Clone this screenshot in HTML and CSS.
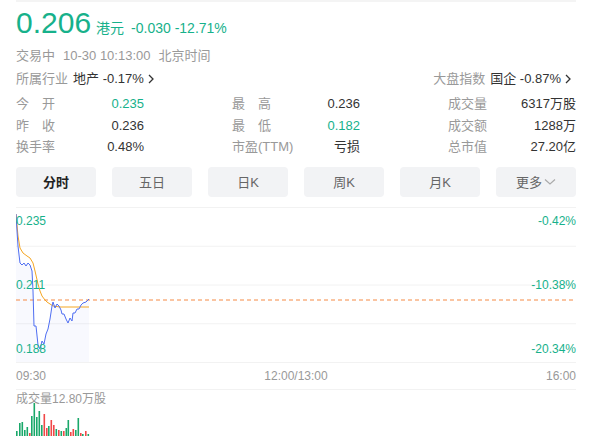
FILE: index.html
```html
<!DOCTYPE html>
<html lang="zh-CN">
<head>
  <meta charset="UTF-8">
  <title>0.206 港元</title>
  <meta name="viewport" content="width=device-width, initial-scale=1.0">
  <link rel="stylesheet" href="styles.css">
</head>
<body>
  <div class="page">
    <div class="topline"></div>

    <div class="quote">
      <span class="price">0.206</span>
      <span class="unit">港元</span>
      <span class="change">-0.030 -12.71%</span>
    </div>

    <div class="status">
      <span>交易中</span>
      <span>10-30 10:13:00</span>
      <span>北京时间</span>
    </div>

    <div class="sector">
      <div class="sector-item">
        <span class="label">所属行业</span>
        <span class="val">地产 -0.17%</span>
        <svg class="arrow" width="6" height="10" viewBox="0 0 6 10"><path d="M1 1l4 4-4 4" fill="none" stroke="#333" stroke-width="1.3"/></svg>
      </div>
      <div class="sector-item">
        <span class="label">大盘指数</span>
        <span class="val">国企 -0.87%</span>
        <svg class="arrow" width="6" height="10" viewBox="0 0 6 10"><path d="M1 1l4 4-4 4" fill="none" stroke="#333" stroke-width="1.3"/></svg>
      </div>
    </div>

    <div class="stats">
      <div class="stat"><span class="label">今　开</span><span class="num down">0.235</span></div>
      <div class="stat"><span class="label">最　高</span><span class="num">0.236</span></div>
      <div class="stat"><span class="label">成交量</span><span class="num">6317万股</span></div>
      <div class="stat"><span class="label">昨　收</span><span class="num">0.236</span></div>
      <div class="stat"><span class="label">最　低</span><span class="num down">0.182</span></div>
      <div class="stat"><span class="label">成交额</span><span class="num">1288万</span></div>
      <div class="stat"><span class="label">换手率</span><span class="num">0.48%</span></div>
      <div class="stat"><span class="label">市盈(TTM)</span><span class="num">亏损</span></div>
      <div class="stat"><span class="label">总市值</span><span class="num">27.20亿</span></div>
    </div>

    <div class="tabs">
      <div class="tab active">分时</div>
      <div class="tab">五日</div>
      <div class="tab">日K</div>
      <div class="tab">周K</div>
      <div class="tab">月K</div>
      <div class="tab">更多<svg class="more" width="12" height="8" viewBox="0 0 12 8"><path d="M1 1.5l5 4.5 5-4.5" fill="none" stroke="#aaa" stroke-width="1.2"/></svg></div>
    </div>

    <div class="chart">
      <svg width="560" height="156" viewBox="0 0 560 156">
        <g stroke="#f2f2f2" stroke-width="1">
          <line x1="0" y1="0.5" x2="560" y2="0.5"/>
          <line x1="0" y1="39.25" x2="560" y2="39.25"/>
          <line x1="0" y1="78" x2="560" y2="78"/>
          <line x1="0" y1="116.75" x2="560" y2="116.75"/>
          <line x1="0" y1="155.5" x2="560" y2="155.5"/>
        </g>
        <polygon fill="rgba(84,108,240,0.045)" points="0,7 1,24 2,39 4,56 6,58 8,56 10,59 12,56 14,58 16,64 17,84 18,119 20,119 22,138 24,142 26,134 28,137 30,127 32,122 34,112 36,99 37,95 39,101 41,97 43,99 45,103 46,107 48,107 50,112 52,116 54,111 56,114 57,106 59,106 61,102 63,102 65,98 67,96 70,95 73,92 73,155 0,155"/>
        <line x1="0" y1="93" x2="560" y2="93" stroke="#f58a45" stroke-width="1" stroke-dasharray="4 3"/>
        <polyline fill="none" stroke="#f5a623" stroke-width="1" points="0,7 2,29 4,41 7,46 11,49 14,51 17,56 19,64 22,77 24,84 26,89 29,93 31,95 34,97 37,99 44,100 73,100"/>
        <polyline fill="none" stroke="#4f6ef2" stroke-width="1" points="0,7 1,24 2,39 4,56 6,58 8,56 10,59 12,56 14,58 16,64 17,84 18,119 20,119 22,138 24,142 26,134 28,137 30,127 32,122 34,112 36,99 37,95 39,101 41,97 43,99 45,103 46,107 48,107 50,112 52,116 54,111 56,114 57,106 59,106 61,102 63,102 65,98 67,96 70,95 73,92"/>
      </svg>
      <div class="axis">
        <span>0.235</span><span>0.211</span><span>0.188</span>
      </div>
      <div class="axis axis-right">
        <span>-0.42%</span><span>-10.38%</span><span>-20.34%</span>
      </div>
    </div>

    <div class="times">
      <span>09:30</span>
      <span>12:00/13:00</span>
      <span>16:00</span>
    </div>

    <div class="vol-label">成交量12.80万股</div>

    <svg class="vol" width="560" height="40" viewBox="0 0 560 40">
      <g fill="#1aa86a">
        <rect x="0" y="25" width="1.6" height="15"/>
        <rect x="3" y="17" width="1.6" height="23"/>
        <rect x="5.5" y="16" width="1.6" height="24"/>
        <rect x="8" y="24" width="1.6" height="16"/>
        <rect x="10.5" y="21" width="1.6" height="19"/>
        <rect x="15" y="10" width="1.6" height="30"/>
        <rect x="17.5" y="-3" width="1.6" height="43"/>
        <rect x="20" y="11" width="1.6" height="29"/>
        <rect x="22.5" y="5" width="1.6" height="35"/>
        <rect x="25" y="19" width="1.6" height="21"/>
        <rect x="32" y="20" width="1.6" height="20"/>
        <rect x="39.5" y="23" width="1.6" height="17"/>
        <rect x="44.5" y="25" width="1.6" height="15"/>
        <rect x="49.5" y="22" width="1.6" height="18"/>
        <rect x="51.5" y="14" width="1.6" height="26"/>
        <rect x="59" y="24" width="1.6" height="16"/>
        <rect x="61.5" y="12" width="1.6" height="28"/>
        <rect x="66" y="28" width="1.6" height="12"/>
        <rect x="71.5" y="28" width="1.6" height="12"/>
      </g>
      <g fill="#f04848">
        <rect x="13" y="27" width="1.6" height="13"/>
        <rect x="27.5" y="8" width="1.6" height="32"/>
        <rect x="30" y="22" width="1.6" height="18"/>
        <rect x="34.5" y="14" width="1.6" height="26"/>
        <rect x="37" y="19" width="1.6" height="21"/>
        <rect x="42" y="24" width="1.6" height="16"/>
        <rect x="47" y="25" width="1.6" height="15"/>
        <rect x="54" y="26" width="1.6" height="14"/>
        <rect x="56.5" y="23" width="1.6" height="17"/>
        <rect x="64" y="27" width="1.6" height="13"/>
        <rect x="69" y="25" width="1.6" height="15"/>
      </g>
    </svg>
  </div>
</body>
</html>
```

FILE: styles.css
```css
html, body {
  margin: 0;
  padding: 0;
  background: #fff;
}

body {
  font-family: "Liberation Sans", "Noto Sans CJK SC", sans-serif;
  color: #333;
  width: 595px;
  height: 436px;
  overflow: hidden;
}

.page {
  width: 560px;
  margin-left: 16px;
}

.topline {
  height: 2px;
  background: #f4f4f4;
}

/* Cotización */
.quote {
  display: flex;
  align-items: baseline;
  height: 36px;
  line-height: 36px;
  margin-top: 3px;
  color: #17b18b;
}

.price {
  font-size: 30px;
  margin-right: 5px;
}

.unit {
  font-size: 14px;
  margin-right: 7px;
}

.change {
  font-size: 14px;
}

.status {
  display: flex;
  gap: 8px;
  font-size: 13px;
  line-height: 22px;
  margin-top: 4px;
  color: #999;
}

.sector {
  display: flex;
  justify-content: space-between;
  font-size: 13px;
  line-height: 22px;
  margin-top: 1px;
}

.sector-item {
  display: flex;
  align-items: center;
  margin-right: 5px;
}

.sector .label {
  color: #999;
  margin-right: 5px;
}

.sector .val {
  color: #333;
}

.arrow {
  margin-left: 4px;
}

/* Datos */
.stats {
  display: grid;
  grid-template-columns: repeat(3, 128px);
  column-gap: 88px;
  margin-top: 3px;
  font-size: 13px;
  line-height: 21.5px;
}

.stat {
  display: flex;
  justify-content: space-between;
}

.stat .label {
  color: #999;
}

.num {
  color: #333;
}

.down {
  color: #17b18b;
}

/* Pestañas */
.tabs {
  display: flex;
  gap: 16px;
  margin-top: 9px;
}

.tab {
  width: 80px;
  height: 30px;
  display: flex;
  align-items: center;
  justify-content: center;
  background: #f2f3f5;
  border-radius: 4px;
  font-size: 13px;
  color: #666;
}

.tab.active {
  color: #222;
  font-weight: bold;
}

.more {
  margin-left: 2px;
}

/* Gráfico */
.chart {
  position: relative;
  height: 156px;
  margin-top: 10px;
}

.chart svg {
  display: block;
}

.axis {
  position: absolute;
  top: 0;
  bottom: 0;
  left: 0;
  display: flex;
  flex-direction: column;
  justify-content: space-between;
  padding: 7px 0 7px;
  font-size: 12px;
  line-height: 14px;
  color: #17b18b;
}

.axis-right {
  left: auto;
  right: 0;
  text-align: right;
}

.times {
  display: flex;
  justify-content: space-between;
  align-items: center;
  height: 26px;
  border-bottom: 1px solid #f2f2f2;
  font-size: 12px;
  color: #999;
}

.vol-label {
  font-size: 12px;
  line-height: 14px;
  margin-top: 2px;
  color: #999;
}

.vol {
  display: block;
  overflow: visible;
}
```
